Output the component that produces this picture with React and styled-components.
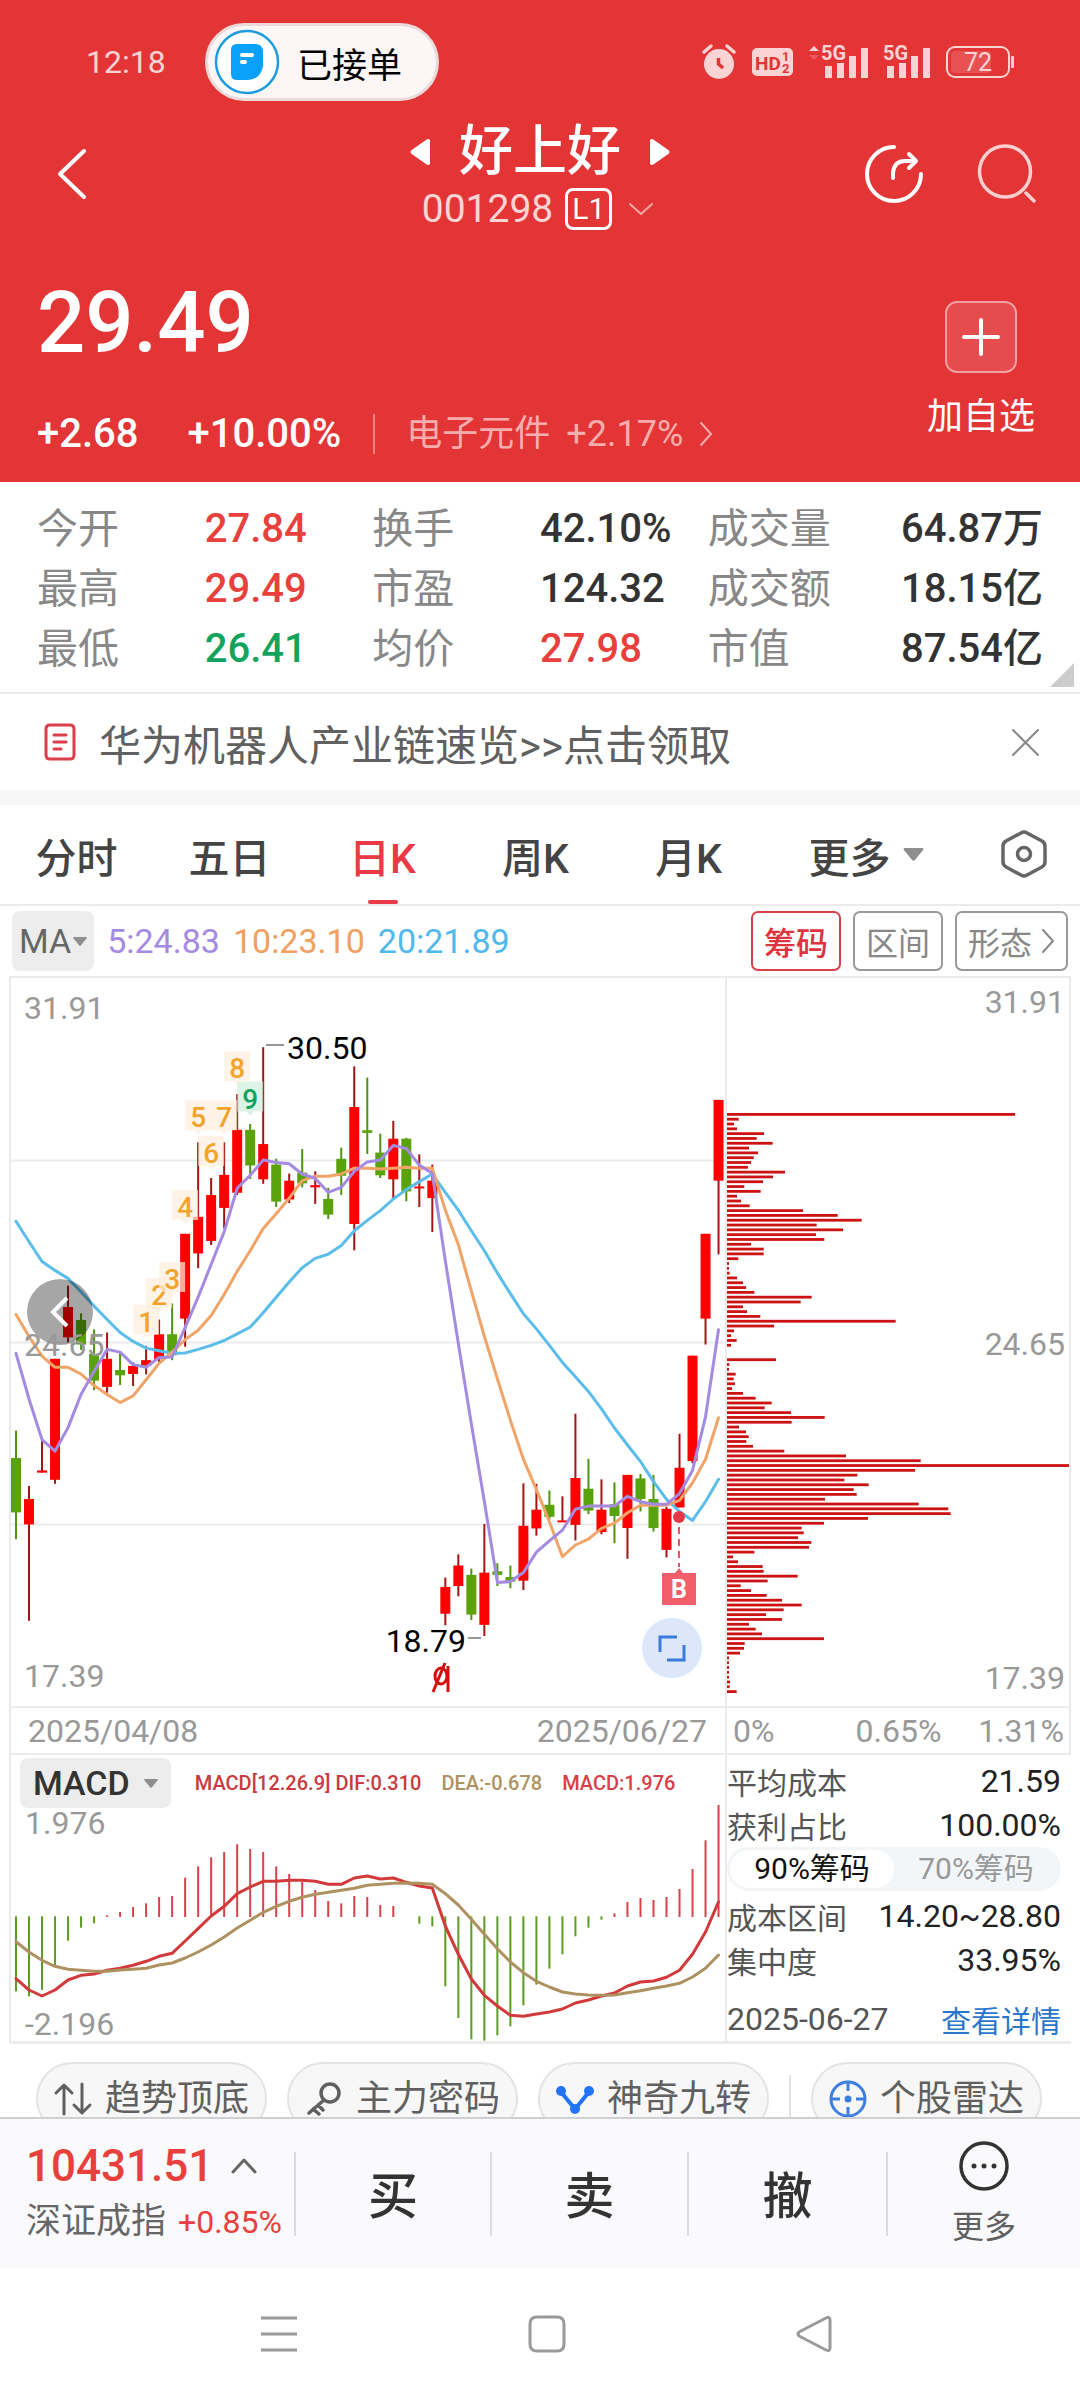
import React, { useState } from 'react';
import styled, { createGlobalStyle } from 'styled-components';

const RED = '#e33536';
const UP = '#e8403c';
const DOWN = '#12a35c';
const LINE = '#ebebeb';
const MUTED = '#999';

const GlobalStyle = createGlobalStyle`
  *, *::before, *::after {
    box-sizing: border-box;
  }
  body {
    margin: 0;
    background: #fff;
    color: #333;
    font-family: Roboto, "Noto Sans CJK SC", sans-serif;
  }
  button {
    margin: 0;
    padding: 0;
    border: 0;
    background: none;
    color: inherit;
    font: inherit;
  }
  svg {
    display: block;
    flex: none;
    overflow: visible;
  }
  a {
    color: inherit;
    text-decoration: none;
  }
  h1, dl, dd {
    margin: 0;
  }
`;

const Page = styled.div`
  display: flex;
  flex-direction: column;
  min-height: 100vh;
`;

/* ---------- header ---------- */

const Hero = styled.header`
  background: ${RED};
  color: #fff;
  padding-bottom: 24px;
`;

const StatusBar = styled.div`
  display: flex;
  align-items: center;
  height: 115px;
  padding: 9px 66px 0 86px;
  color: #fad3d4;
`;

const Clock = styled.time`
  font-size: 32px;
  line-height: 40px;
  width: 119px;
`;

const Island = styled.div`
  display: flex;
  align-items: center;
  gap: 17px;
  height: 78px;
  padding: 0 34px 0 6px;
  border: 3px solid #ecd9da;
  border-radius: 39px;
  background: #fdf6f6;
  color: #000;
  font-size: 35px;
  margin-right: auto;
`;

const StatusIcons = styled.div`
  display: flex;
  align-items: center;
  gap: 16px;
`;

const NavBar = styled.div`
  display: grid;
  grid-template-columns: 1fr auto 1fr;
  align-items: center;
  padding: 0 43px;
`;

const BackButton = styled.button`
  justify-self: start;
  padding-left: 13px;
`;

const Names = styled.div`
  padding-top: 5px;
`;

const Title = styled.h1`
  display: flex;
  align-items: center;
  justify-content: center;
  gap: 29px;
  font-size: 54px;
  font-weight: 500;
  line-height: 64px;
`;

const Code = styled.div`
  display: flex;
  align-items: center;
  justify-content: center;
  gap: 12px;
  font-size: 39px;
  line-height: 50px;
  color: #fbd5d5;
`;

const Level = styled.span`
  border: 3px solid #fff;
  border-radius: 8px;
  padding: 0 4px;
  font-size: 30px;
  line-height: 36px;
  color: #fff;
`;

const Actions = styled.div`
  display: flex;
  justify-content: flex-end;
  gap: 53px;
`;

const Quote = styled.div`
  display: flex;
  justify-content: space-between;
  padding: 37px 45px 0 37px;
`;

const Price = styled.div`
  font-size: 85px;
  font-weight: 500;
  line-height: 104px;
`;

const Changes = styled.div`
  display: flex;
  align-items: center;
  margin-top: 35px;
  font-size: 40px;
  font-weight: 500;
  line-height: 48px;
  gap: 49px;
`;

const Sector = styled.a`
  display: flex;
  align-items: center;
  gap: 16px;
  margin-left: -17px;
  padding-left: 31px;
  border-left: 2px solid #ee8182;
  color: #f7adae;
  font-size: 36px;
  font-weight: 400;
  line-height: 40px;
`;

const AddButton = styled.button`
  display: flex;
  flex-direction: column;
  align-items: center;
  gap: 21px;
  margin-top: 30px;
  font-size: 36px;
  line-height: 46px;
`;

const PlusBox = styled.span`
  display: grid;
  place-items: center;
  width: 72px;
  height: 72px;
  border: 2px solid #f2a0a1;
  border-radius: 12px;
  background: #e64c4d;
`;

/* ---------- stats and notice ---------- */

const Stats = styled.dl`
  position: relative;
  display: grid;
  grid-template-columns: repeat(6, 1fr);
  padding: 17px 37px 13px 37px;
  font-size: 40px;
  line-height: 60px;
  border-bottom: 2px solid ${LINE};
  white-space: nowrap;

  &::after {
    content: '';
    position: absolute;
    right: 6px;
    bottom: 5px;
    border: 12px solid transparent;
    border-right-color: #ccc;
    border-bottom-color: #ccc;
  }
`;

const StatLabel = styled.dt`
  color: #888;
  font-size: 41px;
`;

const StatValue = styled.dd`
  color: ${(p) => p.$color || '#333'};
  font-weight: 500;
  justify-self: ${(p) => (p.$end ? 'end' : 'start')};
`;

const Notice = styled.div`
  display: flex;
  align-items: center;
  gap: 23px;
  height: 111px;
  padding: 0 40px 0 44px;
  border-bottom: 15px solid #f7f7f7;
  color: #606060;
  font-size: 42px;
`;

const NoticeLink = styled.a`
  flex: 1;
`;

/* ---------- period tabs ---------- */

const Tabs = styled.nav`
  display: flex;
  height: 101px;
  border-bottom: 2px solid ${LINE};
  font-size: 41px;
  color: #444;
`;

const Tab = styled.button`
  position: relative;
  flex: ${(p) => p.$grow || 153} 1 0;
  display: flex;
  align-items: center;
  justify-content: center;
  gap: 12px;
  color: ${(p) => (p.$active ? '#eb3a45' : '#444')};
  font-weight: 500;

  &::after {
    content: '';
    display: ${(p) => (p.$active ? 'block' : 'none')};
    position: absolute;
    bottom: 0;
    width: 30px;
    height: 4px;
    border-radius: 2px;
    background: #eb3a45;
  }
`;

const Toolbar = styled.div`
  display: flex;
  align-items: center;
  gap: 13px;
  height: 70px;
  padding: 0 12px;
  font-size: 34px;
`;

const Picker = styled.button`
  display: flex;
  align-items: center;
  gap: ${(p) => (p.$wide ? '14px' : '2px')};
  height: ${(p) => (p.$wide ? '50px' : '60px')};
  margin-right: ${(p) => (p.$wide ? '4px' : 0)};
  padding: ${(p) => (p.$wide ? '0 13px' : '0 7px')};
  border-radius: 8px;
  background: #ededed;
  color: ${(p) => (p.$wide ? '#333' : '#666')};
  font-size: 34px;
`;

const Average = styled.span`
  color: ${(p) => p.$color};
`;

const Tools = styled.div`
  display: flex;
  gap: 12px;
  margin-left: auto;
`;

const ToolButton = styled.button`
  display: flex;
  align-items: center;
  gap: 9px;
  height: 60px;
  padding: 0 11px;
  border: 2px solid ${(p) => (p.$active ? '#d8414c' : '#999')};
  border-radius: 7px;
  color: ${(p) => (p.$active ? '#e03340' : '#888')};
  font-size: 32px;
  font-weight: ${(p) => (p.$active ? 500 : 400)};
`;

/* ---------- charts ---------- */

const Charts = styled.main`
  display: grid;
  grid-template-columns: 716fr 346fr;
  margin: 0 9px;
  border-bottom: 3px solid ${LINE};

  text {
    font-family: Roboto, "Noto Sans CJK SC", sans-serif;
  }
`;

const Panel = styled.section`
  border-top: 2px solid ${LINE};
  border-left: 2px solid ${LINE};
  border-right: ${(p) => (p.$last ? `2px solid ${LINE}` : 0)};

  > svg {
    width: 100%;
    height: auto;
  }
`;

const Axis = styled.div`
  display: grid;
  grid-template-columns: ${(p) => (p.$last ? '1fr auto 1fr' : '1fr auto')};
  align-items: center;
  height: 47px;
  padding: ${(p) => (p.$last ? '0 5px 0 6px' : '0 18px 0 17px')};
  border: solid ${LINE};
  border-width: 2px ${(p) => (p.$last ? '2px' : 0)} 0 2px;
  color: ${MUTED};
  font-size: 32px;

  > :last-child {
    text-align: right;
  }
`;

const MacdHead = styled.div`
  display: flex;
  align-items: center;
  gap: 20px;
  padding: 3px 9px 0;
  font-size: 20px;
  font-weight: 500;
`;

const Costs = styled.section`
  display: flex;
  flex-direction: column;
  border-top: 2px solid ${LINE};
  border-left: 2px solid ${LINE};
  padding: 4px 10px 0 0;
  color: #555;
  font-size: 30px;
`;

const CostRow = styled.div`
  display: flex;
  align-items: center;
  justify-content: space-between;
  height: 44px;
  white-space: nowrap;

  &:last-child {
    margin-top: auto;
  }
`;

const CostValue = styled.span`
  color: #222;
  font-size: 32px;
`;

const CostDate = styled.time`
  font-size: 32px;
`;

const Segment = styled.div`
  display: flex;
  height: 44px;
  padding: 3px;
  margin-bottom: 3px;
  border-radius: 22px;
  background: #f3f6f9;
`;

const SegmentButton = styled.button`
  flex: 1;
  border-radius: 19px;
  background: ${(p) => (p.$active ? '#fff' : 'transparent')};
  color: ${(p) => (p.$active ? '#111' : MUTED)};
  font-size: 30px;
  line-height: 38px;
`;

const DetailLink = styled.a`
  color: #2b76cc;
`;

/* ---------- bottom ---------- */

const Chips = styled.div`
  display: flex;
  gap: 20px;
  height: 73px;
  padding: 18px 38px 0 36px;
  overflow: hidden;
`;

const Chip = styled.button`
  flex: 1;
  display: flex;
  align-items: center;
  justify-content: center;
  gap: 13px;
  height: 73px;
  border: 2px solid #e3e3e3;
  border-radius: 37px;
  background: #f7f7f7;
  color: #606060;
  font-size: 36px;
  line-height: 36px;
  white-space: nowrap;
`;

const ChipDivider = styled.span`
  width: 2px;
  height: 50px;
  margin-top: 13px;
  background: #e3e3e3;
`;

const TradeBar = styled.footer`
  display: grid;
  grid-template-columns: 294fr 196fr 197fr 199fr 194fr;
  align-items: center;
  height: 151px;
  border-top: 2px solid #d0d0d2;
  background: #fafafc;
`;

const IndexQuote = styled.div`
  padding-left: 26px;
  color: ${UP};
  line-height: 56px;
`;

const IndexLine = styled.div`
  display: flex;
  align-items: center;
  gap: ${(p) => (p.$small ? '12px' : '18px')};
  font-size: ${(p) => (p.$small ? '32px' : '44px')};
  font-weight: ${(p) => (p.$small ? 400 : 500)};
  white-space: nowrap;
`;

const IndexName = styled.span`
  color: #666;
  font-size: 35px;
`;

const TradeButton = styled.button`
  height: 84px;
  padding-top: 6px;
  border-left: 2px solid #dcdcde;
  font-size: 50px;
  font-weight: 500;
  line-height: 78px;
`;

const MoreButton = styled.button`
  display: flex;
  flex-direction: column;
  align-items: center;
  justify-content: center;
  gap: 16px;
  height: 84px;
  border-left: 2px solid #dcdcde;
  color: #606060;
  font-size: 32px;
  line-height: 40px;
`;

const SystemNav = styled.div`
  display: flex;
  justify-content: center;
  align-items: flex-start;
  gap: 230px;
  padding: 47px 0 0 13px;
  height: 132px;
`;

/* ---------- data ---------- */

const stats = [
  ['今开', '27.84', UP], ['换手', '42.10%'], ['成交量', '64.87万'],
  ['最高', '29.49', UP], ['市盈', '124.32'], ['成交额', '18.15亿'],
  ['最低', '26.41', DOWN], ['均价', '27.98', UP], ['市值', '87.54亿'],
];

// [high, body top, body bottom, low, 1 = falling day]
const candles = [
  [1031, 1092, 1214, 1274, 1], [1155, 1184, 1241, 1457], [1050, 1120, 1125, 1125], [870, 870, 1141, 1150],
  [706, 754, 822, 833], [768, 783, 838, 850, 1], [804, 859, 919, 940, 1], [811, 870, 933, 946],
  [853, 895, 907, 929, 1], [878, 886, 904, 931], [841, 873, 885, 905], [782, 815, 871, 878],
  [746, 815, 862, 873, 1], [590, 590, 780, 843], [385, 552, 634, 667], [465, 503, 606, 615],
  [385, 458, 532, 578], [277, 357, 498, 503], [344, 357, 437, 467, 1], [172, 389, 468, 478],
  [422, 435, 518, 530, 1], [455, 471, 513, 521], [400, 453, 477, 486, 1], [450, 481, 486, 523],
  [487, 512, 547, 557, 1], [397, 422, 460, 503, 1], [215, 306, 568, 627], [240, 358, 364, 411, 1],
  [366, 408, 459, 465, 1], [337, 377, 468, 510], [375, 377, 495, 517, 1], [412, 484, 487, 530],
  [435, 471, 510, 586], [1360, 1381, 1441, 1467], [1308, 1333, 1379, 1402], [1340, 1354, 1443, 1455, 1],
  [1240, 1349, 1466, 1491], [1328, 1346, 1354, 1379, 1], [1333, 1359, 1369, 1384, 1], [1149, 1244, 1367, 1388],
  [1150, 1208, 1250, 1266], [1165, 1197, 1224, 1230, 1], [1178, 1232, 1235, 1235], [993, 1137, 1242, 1277],
  [1094, 1161, 1210, 1218, 1], [1140, 1208, 1258, 1263], [1147, 1196, 1222, 1283, 1], [1130, 1130, 1249, 1318],
  [1128, 1138, 1184, 1212, 1], [1130, 1184, 1249, 1257, 1], [1202, 1206, 1298, 1315], [1038, 1114, 1203, 1203],
  [863, 863, 1099, 1104], [590, 590, 780, 838], [290, 290, 471, 636],
];

const ma5 = [858, 960, 1051, 1077, 1024, 950, 898, 849, 855, 883, 889, 867, 866, 800, 732, 658, 585, 488, 459, 425,
  430, 433, 456, 466, 497, 486, 450, 429, 425, 392, 399, 436, 455, 650, 835, 1015, 1190, 1371, 1369, 1349,
  1303, 1278, 1254, 1207, 1200, 1200, 1200, 1178, 1190, 1196, 1196, 1172, 1120, 1000, 805];

const ma10 = [771, 820, 864, 889, 889, 904, 930, 950, 968, 953, 917, 880, 855, 827, 806, 773, 726, 674, 628, 578,
  545, 510, 471, 461, 461, 456, 443, 443, 445, 443, 441, 443, 443, 537, 614, 718, 820, 915, 1008, 1095,
  1163, 1235, 1313, 1287, 1274, 1250, 1238, 1215, 1198, 1198, 1198, 1187, 1148, 1095, 1002];

const ma20 = [562, 608, 652, 672, 690, 720, 752, 782, 811, 831, 846, 852, 858, 857, 849, 840, 829, 814, 799, 767,
  732, 698, 666, 645, 636, 616, 583, 560, 538, 512, 491, 473, 456, 497, 537, 583, 628, 678, 724, 769,
  803, 840, 878, 910, 943, 982, 1025, 1063, 1100, 1145, 1185, 1212, 1232, 1190, 1140];

const turns = [[1, 787], [2, 727], [3, 691], [4, 530], [5, 329], [6, 409], [7, 329], [8, 219], [9, 287]];

const chipLevels = [864, 35, 21, 30, 111, 89, 137, 66, 93, 80, 72, 63, 174, 138, 108, 52, 101, 30, 42, 68, 228, 332,
  404, 269, 348, 267, 292, 72, 110, 110, 34, 6, 6, 8, 30, 48, 57, 82, 254, 221, 48, 60, 100, 506, 141, 21, 12, 29,
  12, 0, 0, 147, 7, 6, 26, 20, 24, 15, 48, 86, 134, 113, 192, 293, 194, 36, 57, 65, 58, 78, 172, 357, 581, 1026,
  564, 391, 352, 425, 380, 389, 294, 575, 664, 671, 423, 291, 224, 230, 213, 253, 246, 82, 18, 33, 107, 110, 212,
  122, 41, 72, 119, 165, 224, 170, 117, 165, 66, 86, 105, 291, 53, 51, 39, 6, 6, 6, 6, 6, 9, 8, 29];

const macd = [1058, 1073, 1054, 980, 906, 867, 854, 828, 818, 803, 792, 773, 770, 715, 681, 654, 638, 615, 629, 638,
  681, 704, 727, 752, 785, 792, 770, 773, 797, 800, 833, 855, 863, 1043, 1138, 1202, 1206, 1190, 1163, 1100,
  1038, 990, 947, 893, 867, 843, 822, 788, 776, 782, 773, 749, 689, 603, 497];

const dif = [1018, 1052, 1070, 1052, 1022, 1008, 1004, 993, 987, 978, 966, 951, 942, 905, 868, 830, 801, 763, 743, 726,
  726, 723, 723, 726, 735, 735, 716, 710, 719, 716, 729, 740, 746, 860, 945, 1019, 1068, 1100, 1128, 1131,
  1124, 1118, 1109, 1091, 1082, 1070, 1061, 1040, 1028, 1025, 1014, 993, 945, 878, 788];

const dea = [907, 938, 963, 981, 990, 993, 996, 996, 992, 990, 987, 977, 971, 956, 938, 917, 893, 866, 843, 819,
  801, 786, 774, 765, 759, 753, 747, 738, 735, 732, 731, 732, 735, 763, 797, 840, 885, 928, 968, 1000,
  1026, 1043, 1058, 1064, 1067, 1068, 1067, 1060, 1054, 1047, 1040, 1032, 1013, 987, 947];

const dayX = (i) => 5 + i * 13.01;
const priceY = (v) => (v - 17) / 2.24;
const macdY = (v) => (v - 506) / 3;
const toPoints = (values, scale) => values.map((v, i) => `${dayX(i).toFixed(1)},${scale(v).toFixed(1)}`).join(' ');

/* ---------- icons ---------- */

const Stroke = ({ w, h, d, color = 'currentColor', width = 3, ...rest }) => (
  <svg width={w} height={h} viewBox={`0 0 ${w} ${h}`} fill="none" stroke={color} strokeWidth={width}
    strokeLinecap="round" strokeLinejoin="round" {...rest}>
    <path d={d} />
  </svg>
);

const Caret = ({ w = 14, h = 9 }) => (
  <svg width={w} height={h} viewBox="0 0 14 9">
    <path d="M1 0H13Q14.500 0 13.500 1.500L8 8.300Q7 9.300 6 8.300L.5 1.500Q-.5 0 1 0Z" fill="#8e8e8e" />
  </svg>
);

const Signal = ({ arrows }) => (
  <svg width={arrows ? 59 : 46} height="50" viewBox={arrows ? '-13 -8 59 50' : '0 -8 46 50'} fill="currentColor">
    {arrows && <path d="M-13 6L-8 1L-3 6Z" />}
    {arrows && <path d="M-13 10L-8 15L-3 10Z" opacity=".25" />}
    <text x="-1" y="15" fontSize="20" fontWeight="700">5G</text>
    <path d="M3 21H10V33H3ZM15 18H22V33H15ZM27 11H34V33H27ZM39 3H46V33H39Z" />
  </svg>
);

const StatusRight = () => (
  <StatusIcons>
    <svg width="34" height="36" viewBox="0 0 34 36" fill="currentColor">
      <circle cx="17" cy="20" r="15" />
      <path d="M2 8L9 2M32 8L25 2" stroke="currentColor" strokeWidth="3.500" strokeLinecap="round" />
      <path d="M16.500 14V20L21 24" stroke={RED} strokeWidth="3.500" fill="none" />
    </svg>
    <svg width="41" height="28" viewBox="0 0 41 28">
      <rect width="41" height="28" rx="5" fill="currentColor" />
      <g fill={RED} fontWeight="700">
        <text x="3" y="22" fontSize="19">HD</text>
        <text x="30" y="13" fontSize="13">1</text>
        <text x="30" y="25" fontSize="13">2</text>
      </g>
    </svg>
    <Signal arrows />
    <Signal />
    <svg width="68" height="32" viewBox="0 0 68 32">
      <rect x="1" y="1" width="62" height="30" rx="8" fill="none" stroke="currentColor" strokeWidth="2" />
      <rect x="5" y="5" width="40" height="22" rx="4" fill="#fff" opacity=".14" />
      <rect x="65" y="10" width="3" height="12" rx="1" fill="currentColor" />
      <text x="32" y="25" fontSize="25" textAnchor="middle" fill="currentColor">72</text>
    </svg>
  </StatusIcons>
);

/* ---------- chart drawings ---------- */

const KLine = () => (
  <svg viewBox="0 0 714 728" fontSize="32">
    <path d="M0 182.500H714M0 364.500H714M0 546.500H714" stroke={LINE} strokeWidth="2" />
    <g fill={MUTED}>
      <text x="13" y="41">31.91</text>
      <text x="13" y="709">17.39</text>
    </g>
    {candles.map(([high, top, bottom, low, falling], i) => (
      <g key={i} fill={falling ? '#5aa20b' : '#fe0000'}>
        <rect x={dayX(i) - 1} y={priceY(high)} width="2" height={priceY(low) - priceY(high)}
          fill={falling ? '#4f9410' : '#a31515'} />
        <rect x={dayX(i) - 5} y={priceY(top)} width="10" height={Math.max(2, priceY(bottom) - priceY(top))} />
      </g>
    ))}
    <g fill="none" strokeWidth="3" strokeLinejoin="round" strokeLinecap="round">
      <polyline points={toPoints(ma20, priceY)} stroke="#5bbdea" />
      <polyline points={toPoints(ma10, priceY)} stroke="#f0a468" />
      <polyline points={toPoints(ma5, priceY)} stroke="#a58ae2" />
    </g>
    {turns.map(([n, level]) => {
      const x = dayX(n + 9);
      const y = priceY(level);
      const last = n === 9;
      return (
        <g key={n}>
          <path d={`M${x - 13} ${y - 17}h26v30h-9l-4 4l-4-4h-9z`} fill={last ? '#cdeedd' : '#feeedb'} opacity=".7" />
          <text x={x} y={y + 10} fontSize="28" fontWeight="500" textAnchor="middle" fill={last ? DOWN : '#f3a32b'}>{n}</text>
        </g>
      );
    })}
    <path d="M255 67H273M457 660H470" stroke="#777" strokeWidth="1.500" />
    <g fill="#000">
      <text x="276" y="81">30.50</text>
      <text x="455" y="674" textAnchor="end">18.79</text>
    </g>
    <g fill="none" stroke="#d40f10" strokeWidth="3">
      <ellipse cx="430" cy="698" rx="6" ry="8" />
      <path d="M437 688V714M422 714L434 685" />
    </g>
    <circle cx="668" cy="539" r="6" fill="#e5394a" />
    <path d="M668 549V589" stroke="#e25564" strokeWidth="2" strokeDasharray="7 5" />
    <path d="M651 595H664L668 590L672 595H685V627H651Z" fill="#f25f6a" />
    <text x="668" y="620" fontSize="25" fontWeight="700" textAnchor="middle" fill="#fff">B</text>
    <circle cx="661" cy="670" r="30" fill="#dce7fc" />
    <path d="M649 674V659H666M656 682H673V667" fill="none" stroke="#3a7bdc" strokeWidth="3" />
    <circle cx="49" cy="334" r="33" fill="#000" opacity=".35" />
    <path d="M56 320L42 334L56 348" fill="none" stroke="#fff" strokeWidth="4" />
    <text x="13" y="378" fill={MUTED}>24.65</text>
  </svg>
);

const ChipProfile = () => (
  <svg viewBox="0 0 342 728" fontSize="32">
    {chipLevels.map((v, i) => (
      <rect key={i} x="0" y={135 + i * 4.81} width={v / 3} height="2.800" fill="#cc1213" />
    ))}
    <g fill={MUTED} textAnchor="end">
      <text x="338" y="35">31.91</text>
      <text x="338" y="377">24.65</text>
      <text x="338" y="711">17.39</text>
    </g>
  </svg>
);

const Macd = () => (
  <svg viewBox="0 0 714 233" fontSize="32">
    <g fill={MUTED}>
      <text x="14" y="26">1.976</text>
      <text x="14" y="227">-2.196</text>
    </g>
    {macd.map((v, i) => v !== 833 && (
      <rect key={i} x={dayX(i) - 1} width="2" y={Math.min(macdY(v), macdY(831))}
        height={Math.abs(macdY(v) - macdY(833))} fill={v > 833 ? '#5b9c22' : '#d8414a'} />
    ))}
    <g fill="none" strokeWidth="3" strokeLinejoin="round" strokeLinecap="round">
      <polyline points={toPoints(dif, macdY)} stroke="#d1393a" />
      <polyline points={toPoints(dea, macdY)} stroke="#ae9160" />
    </g>
  </svg>
);

const periods = ['分时', '五日', '日K', '周K', '月K'];

export default function App() {
  const [period, setPeriod] = useState('日K');
  const [share, setShare] = useState(90);

  return (
    <Page>
      <GlobalStyle />
      <Hero>
        <StatusBar>
          <Clock>12:18</Clock>
          <Island>
            <svg width="66" height="66" viewBox="0 0 66 66">
              <circle cx="33" cy="33" r="31" fill="#fff" stroke="#1d9be0" strokeWidth="2.500" />
              <path d="M23 15H41Q49 15 49 23V37Q47 50 34 51H23Q17 51 17 45V21Q17 15 23 15Z" fill="#0aa1fb" />
              <path d="M28 26H38M28 33H31" stroke="#fff" strokeWidth="4" strokeLinecap="round" />
            </svg>
            已接单
          </Island>
          <StatusRight />
        </StatusBar>

        <NavBar>
          <BackButton aria-label="返回">
            <Stroke w={32} h={52} d="M28 2L4 25L28 48" width={4} />
          </BackButton>
          <Names>
            <Title>
              <svg width="20" height="26" viewBox="0 0 20 26" fill="#fff"><path d="M20 1V25Q18 27 16 25L1 14.500Q0 13 1 11.500L16 1Q18 -1 20 1Z" /></svg>
              好上好
              <svg width="20" height="26" viewBox="0 0 20 26" fill="#fff"><path d="M0 1V25Q2 27 4 25L19 14.500Q20 13 19 11.500L4 1Q2 -1 0 1Z" /></svg>
            </Title>
            <Code>
              001298
              <Level>L1</Level>
              <Stroke w={34} h={14} d="M6 2L17 12L28 2" width={2} color="#f6a9aa" />
            </Code>
          </Names>
          <Actions>
            <button aria-label="分享">
              <Stroke w={60} h={60} d="M30 2A27 27 0 1 0 57 29M29 33V28Q30 16 41 16H51M45 9L52 16L45 23" width={4} />
            </button>
            <button aria-label="搜索">
              <Stroke w={60} h={60} d="M28 1A25.500 25.500 0 1 0 28 52A25.500 25.500 0 1 0 28 1M49 48L57 56" width={3.5} color="#fbcfd0" />
            </button>
          </Actions>
        </NavBar>

        <Quote>
          <div>
            <Price>29.49</Price>
            <Changes>
              <span>+2.68</span>
              <span>+10.00%</span>
              <Sector href="#sector">
                <span>电子元件</span>
                <span>+2.17%</span>
                <Stroke w={14} h={26} d="M2 2L12 13L2 24" width={2} />
              </Sector>
            </Changes>
          </div>
          <AddButton>
            <PlusBox><Stroke w={38} h={38} d="M19 2V36M2 19H36" width={4} /></PlusBox>
            加自选
          </AddButton>
        </Quote>
      </Hero>

      <Stats>
        {stats.map(([label, value, color], i) => (
          <React.Fragment key={label}>
            <StatLabel>{label}</StatLabel>
            <StatValue $color={color} $end={i % 3 === 2}>{value}</StatValue>
          </React.Fragment>
        ))}
      </Stats>

      <Notice>
        <Stroke w={32} h={38} d="M6 2H26Q30 2 30 6V32Q30 36 26 36H6Q2 36 2 32V6Q2 2 6 2ZM10 12H22M10 19H22M10 26H17" color="#dc3e4c" />
        <NoticeLink href="#notice">{'华为机器人产业链速览>>点击领取'}</NoticeLink>
        <button aria-label="关闭"><Stroke w={29} h={29} d="M2 2L27 27M27 2L2 27" width={2} color="#888" /></button>
      </Notice>

      <Tabs>
        {periods.map((p) => (
          <Tab key={p} $active={p === period} onClick={() => setPeriod(p)}>{p}</Tab>
        ))}
        <Tab $grow={202}>更多<Caret w={21} h={13} /></Tab>
        <Tab $grow={113} aria-label="设置">
          <svg width="46" height="50" viewBox="0 0 46 50" fill="none" stroke="#666" strokeWidth="3.500" strokeLinejoin="round">
            <path d="M20 3Q23 1 26 3L41 11Q44 13 44 16V32Q44 35 41 37L26 45Q23 47 20 45L5 37Q2 35 2 32V16Q2 13 5 11Z" />
            <circle cx="23" cy="24" r="6.500" />
          </svg>
        </Tab>
      </Tabs>

      <Toolbar>
        <Picker>MA<Caret /></Picker>
        <Average $color="#a58ae2">5:24.83</Average>
        <Average $color="#f0a060">10:23.10</Average>
        <Average $color="#4fb9ee">20:21.89</Average>
        <Tools>
          <ToolButton $active>筹码</ToolButton>
          <ToolButton>区间</ToolButton>
          <ToolButton>形态<Stroke w={14} h={26} d="M2 2L12 13L2 24" width={2} /></ToolButton>
        </Tools>
      </Toolbar>

      <Charts>
        <Panel><KLine /></Panel>
        <Panel $last><ChipProfile /></Panel>
        <Axis>
          <span>2025/04/08</span>
          <span>2025/06/27</span>
        </Axis>
        <Axis $last>
          <span>0%</span>
          <span>0.65%</span>
          <span>1.31%</span>
        </Axis>
        <Panel>
          <MacdHead>
            <Picker $wide>MACD<Caret /></Picker>
            <Average $color="#c93b3e">MACD[12.26.9] DIF:0.310</Average>
            <Average $color="#ae9160">DEA:-0.678</Average>
            <Average $color="#d83e47">MACD:1.976</Average>
          </MacdHead>
          <Macd />
        </Panel>
        <Costs>
          <CostRow>平均成本<CostValue>21.59</CostValue></CostRow>
          <CostRow>获利占比<CostValue>100.00%</CostValue></CostRow>
          <Segment>
            {[90, 70].map((n) => (
              <SegmentButton key={n} $active={n === share} onClick={() => setShare(n)}>{n}%筹码</SegmentButton>
            ))}
          </Segment>
          <CostRow>成本区间<CostValue>14.20~28.80</CostValue></CostRow>
          <CostRow>集中度<CostValue>33.95%</CostValue></CostRow>
          <CostRow>
            <CostDate>2025-06-27</CostDate>
            <DetailLink href="#detail">查看详情</DetailLink>
          </CostRow>
        </Costs>
      </Charts>

      <Chips>
        <Chip>
          <Stroke w={38} h={34} d="M10 32V3M2 11L10 3L18 11M28 2V31M20 23L28 31L36 23" />
          趋势顶底
        </Chip>
        <Chip>
          <Stroke w={38} h={34} d="M25 2A9 9 0 1 0 25 20A9 9 0 1 0 25 2M19 18L4 31M8 27L14 32M13 23L18 28" width={3.5} />
          主力密码
        </Chip>
        <Chip>
          <svg width="38" height="34" viewBox="0 0 38 34" fill="#2273f6">
            <path d="M5 10L19 27L33 10" fill="none" stroke="#2273f6" strokeWidth="4" />
            <circle cx="5" cy="9" r="5" /><circle cx="33" cy="9" r="5" /><circle cx="19" cy="27" r="5" />
          </svg>
          神奇九转
        </Chip>
        <ChipDivider />
        <Chip>
          <svg width="38" height="38" viewBox="0 0 38 38" fill="none" stroke="#3d7fe0" strokeWidth="3">
            <circle cx="19" cy="19" r="17" />
            <path d="M19 2V11M19 27V36M2 19H11M27 19H36" />
            <circle cx="19" cy="19" r="3.500" fill="#3d7fe0" stroke="none" />
          </svg>
          个股雷达
        </Chip>
      </Chips>

      <TradeBar>
        <IndexQuote>
          <IndexLine>10431.51<Stroke w={26} h={16} d="M2 14L13 2L24 14" color="#666" /></IndexLine>
          <IndexLine $small><IndexName>深证成指</IndexName>+0.85%</IndexLine>
        </IndexQuote>
        <TradeButton>买</TradeButton>
        <TradeButton>卖</TradeButton>
        <TradeButton>撤</TradeButton>
        <MoreButton>
          <svg width="50" height="50" viewBox="0 0 50 50" fill="#333">
            <circle cx="25" cy="25" r="23" fill="none" stroke="#333" strokeWidth="3.500" />
            <circle cx="15" cy="25" r="2.500" /><circle cx="25" cy="25" r="2.500" /><circle cx="35" cy="25" r="2.500" />
          </svg>
          更多
        </MoreButton>
      </TradeBar>

      <SystemNav>
        <button aria-label="最近任务"><Stroke w={38} h={38} d="M1 3H37M1 19H37M1 35H37" color="#9a9a9a" strokeLinecap="butt" /></button>
        <button aria-label="主屏幕"><Stroke w={38} h={38} d="M9 2H29Q36 2 36 9V29Q36 36 29 36H9Q2 36 2 29V9Q2 2 9 2Z" color="#9a9a9a" /></button>
        <button aria-label="后退"><Stroke w={38} h={38} d="M3 17L30 3Q34 1 34 5V33Q34 37 30 35L3 21Q1 19 3 17Z" color="#9a9a9a" /></button>
      </SystemNav>
    </Page>
  );
}
